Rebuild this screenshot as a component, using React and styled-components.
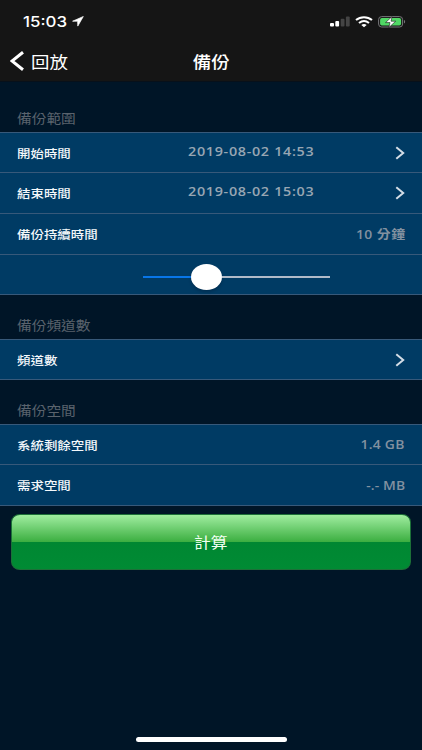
import React from "react";
import styled, { createGlobalStyle } from "styled-components";

const GlobalStyle = createGlobalStyle`
  * { box-sizing: border-box; }
  body { margin: 0; background: #001527; }
`;

const Screen = styled.main`
  width: 422px;
  height: 750px;
  display: flex;
  flex-direction: column;
  overflow: hidden;
  background: #001527;
  font-family: "Open Sans", "Noto Sans CJK TC", sans-serif;
`;

const Top = styled.header`
  height: 82px;
  flex: none;
  background: #151515;
  border-bottom: 1px solid #07101a;
  color: #fff;
`;

const StatusBar = styled.div`
  height: 43px;
  display: flex;
  align-items: center;
  padding: 0 16px 0 23px;
`;

const Text = styled.span`
  display: inline-block;
  flex: none;
  white-space: nowrap;
  transform: scaleX(${(p) => p.$stretch || 1.14});
  transform-origin: ${(p) => p.$origin || "left"} center;
`;

const Clock = styled(Text)`
  width: 49px;
  font: 500 14.8px/20px Inter, sans-serif;
`;

const StatusIcons = styled.div`
  margin-left: auto;
  display: flex;
  align-items: center;
`;

const Icon = styled.svg`
  display: block;
  flex: none;
  margin-left: ${(p) => p.$gap || 0}px;
`;

const NavBar = styled.nav`
  height: 35px;
  display: grid;
  grid-template-columns: 1fr auto 1fr;
  align-items: center;
  padding: 0 10px;
`;

const Back = styled.button`
  display: flex;
  align-items: center;
  gap: 7px;
  padding: 0;
  border: 0;
  background: none;
  color: #fff;
  font: 400 16.2px/24px "Noto Sans CJK TC", sans-serif;
`;

const Title = styled(Text)`
  font: 500 16.2px/24px "Noto Sans CJK TC", sans-serif;
`;

const SectionTitle = styled.h2`
  height: ${(p) => p.$height}px;
  flex: none;
  margin: 0;
  padding: 0 0 5px 17px;
  display: flex;
  align-items: flex-end;
  color: #5a636d;
  font: 400 12.9px/18px "Noto Sans CJK TC", sans-serif;
`;

const Group = styled.section`
  flex: none;
  background: #003b64;
  border-top: 1px solid #37597a;
`;

const Row = styled.div`
  height: ${(p) => p.$height || 41}px;
  display: flex;
  align-items: center;
  padding: 0 17px;
  border-bottom: 1px solid #37597a;
`;

const Label = styled(Text)`
  color: #f4f8fb;
  font: 500 11.8px/18px "Noto Sans CJK TC", sans-serif;
`;

const Value = styled(Text)`
  margin-left: auto;
  padding-top: 1px;
  color: #8291a0;
  font-size: 12.2px;
  line-height: 18px;
  font-weight: 600;
  letter-spacing: ${(p) => p.$spacing || 0}px;
`;

const DateValue = styled(Text)`
  width: 126px;
  margin: 0 81px 2px auto;
  color: #98a6b3;
  font-size: 12.6px;
  line-height: 18px;
  font-weight: 600;
  letter-spacing: 0.6px;
`;

const SliderRow = styled(Row)`
  padding: 4px 92px 0 143px;
`;

const Track = styled.div`
  flex: 1;
  height: 26px;
  display: flex;
  align-items: center;
`;

const Bar = styled.div`
  height: 2px;
  width: ${(p) => p.$width};
  flex: ${(p) => (p.$width ? "none" : 1)};
  margin-top: 1px;
  background: ${(p) => p.$color};
`;

const Knob = styled.div`
  width: 31px;
  height: 26px;
  flex: none;
  border-radius: 50%;
  background: #fff;
  box-shadow: 0 2px 3px rgba(0, 10, 30, 0.25);
`;

const Calculate = styled.button`
  height: 56px;
  flex: none;
  margin: 8px 11px 0;
  padding: 0;
  border: 1px solid #1c7038;
  border-radius: 9px / 8px;
  background: linear-gradient(#a0eda0 0, #3bae40 50%, #008732 50%, #008b34 100%);
  color: #f2fff2;
  font: 400 14.7px/20px "Noto Sans CJK TC", sans-serif;
`;

const HomeIndicator = styled.div`
  width: 151px;
  height: 5px;
  flex: none;
  margin: auto auto 8px;
  border-radius: 3px;
  background: #fff;
`;

const Chevron = () => (
  <Icon width="10" height="14" viewBox="0 0 10 14" fill="none">
    <path d="M1.3 1.2 8.2 7l-6.9 5.8" stroke="#d3dde6" strokeWidth="2" />
  </Icon>
);

const SignalIcon = () => (
  <Icon width="20" height="11" viewBox="0 0 20 11">
    <rect x="0" y="7" width="4" height="3.5" rx="1" fill="#fff" />
    <rect x="5.3" y="5" width="3.8" height="5.5" rx="1" fill="#fff" />
    <rect x="10.7" y="2.7" width="3.8" height="7.8" rx="1" fill="#444" />
    <rect x="15.9" y="0.5" width="3.8" height="10" rx="1" fill="#444" />
  </Icon>
);

const WifiIcon = () => (
  <Icon $gap={5} width="18" height="12" viewBox="0 0 18 12" fill="none" stroke="#fff" strokeWidth="2">
    <path d="M1 4.1C5.5.2 12.5.2 17 4.1" />
    <path d="M4 7c3-2.5 7-2.5 10 0" />
    <path d="M6.3 8.9c1.6-1.3 3.8-1.3 5.4 0L9 11.3Z" fill="#fff" stroke="none" />
  </Icon>
);

const BatteryIcon = () => (
  <Icon $gap={5} width="28" height="12" viewBox="0 0 28 12">
    <rect x="0.6" y="0.6" width="24" height="10.4" rx="3" fill="none" stroke="#77777a" strokeWidth="1" />
    <rect x="2.1" y="2" width="21" height="7.6" rx="1.8" fill="#50d865" />
    <path d="M26 4.1c1.5.3 1.5 3.1 0 3.4Z" fill="#77777a" />
    <path d="m14 .6-6.5 6H12l-1.1 4.9 6.8-6.3h-4.6Z" fill="#fff" stroke="#151515" strokeWidth="0.6" />
  </Icon>
);

const DateRow = ({ label, value, height }) => (
  <Row $height={height}>
    <Label>{label}</Label>
    <DateValue>{value}</DateValue>
    <Chevron />
  </Row>
);

export default function App() {
  return (
    <Screen>
      <GlobalStyle />
      <Top>
        <StatusBar>
          <Clock>15:03</Clock>
          <Icon width="12" height="11" viewBox="0 0 12 11">
            <path d="M11.3.5.6 5.2h5l.2 4.9Z" fill="#fff" stroke="#fff" strokeWidth="0.7" strokeLinejoin="round" />
          </Icon>
          <StatusIcons>
            <SignalIcon />
            <WifiIcon />
            <BatteryIcon />
          </StatusIcons>
        </StatusBar>
        <NavBar>
          <Back>
            <Icon width="14" height="20" viewBox="0 0 14 20" fill="none">
              <path d="M13 1.3 2 10l11 8.7" stroke="#fff" strokeWidth="3" />
            </Icon>
            <Text>回放</Text>
          </Back>
          <Title $origin="center">備份</Title>
        </NavBar>
      </Top>
      <SectionTitle $height={50}><Text>備份範圍</Text></SectionTitle>
      <Group>
        <DateRow label="開始時間" value="2019-08-02 14:53" height={40} />
        <DateRow label="結束時間" value="2019-08-02 15:03" />
        <Row>
          <Label>備份持續時間</Label>
          <Value $origin="right" $spacing={0.4}>10 分鐘</Value>
        </Row>
        <SliderRow $height={40}>
          <Track>
            <Bar $width="48px" $color="#0876e8" />
            <Knob />
            <Bar $color="#b0bac8" />
          </Track>
        </SliderRow>
      </Group>
      <SectionTitle $height={44}><Text>備份頻道數</Text></SectionTitle>
      <Group>
        <Row $height={40}>
          <Label>頻道數</Label>
          <Value />
          <Chevron />
        </Row>
      </Group>
      <SectionTitle $height={44}><Text>備份空間</Text></SectionTitle>
      <Group>
        <Row $height={40}>
          <Label>系統剩餘空間</Label>
          <Value $origin="right" $spacing={0.2}>1.4 GB</Value>
        </Row>
        <Row>
          <Label>需求空間</Label>
          <Value $origin="right" $spacing={0.1}>-.- MB</Value>
        </Row>
      </Group>
      <Calculate><Text $origin="center">計算</Text></Calculate>
      <HomeIndicator />
    </Screen>
  );
}
